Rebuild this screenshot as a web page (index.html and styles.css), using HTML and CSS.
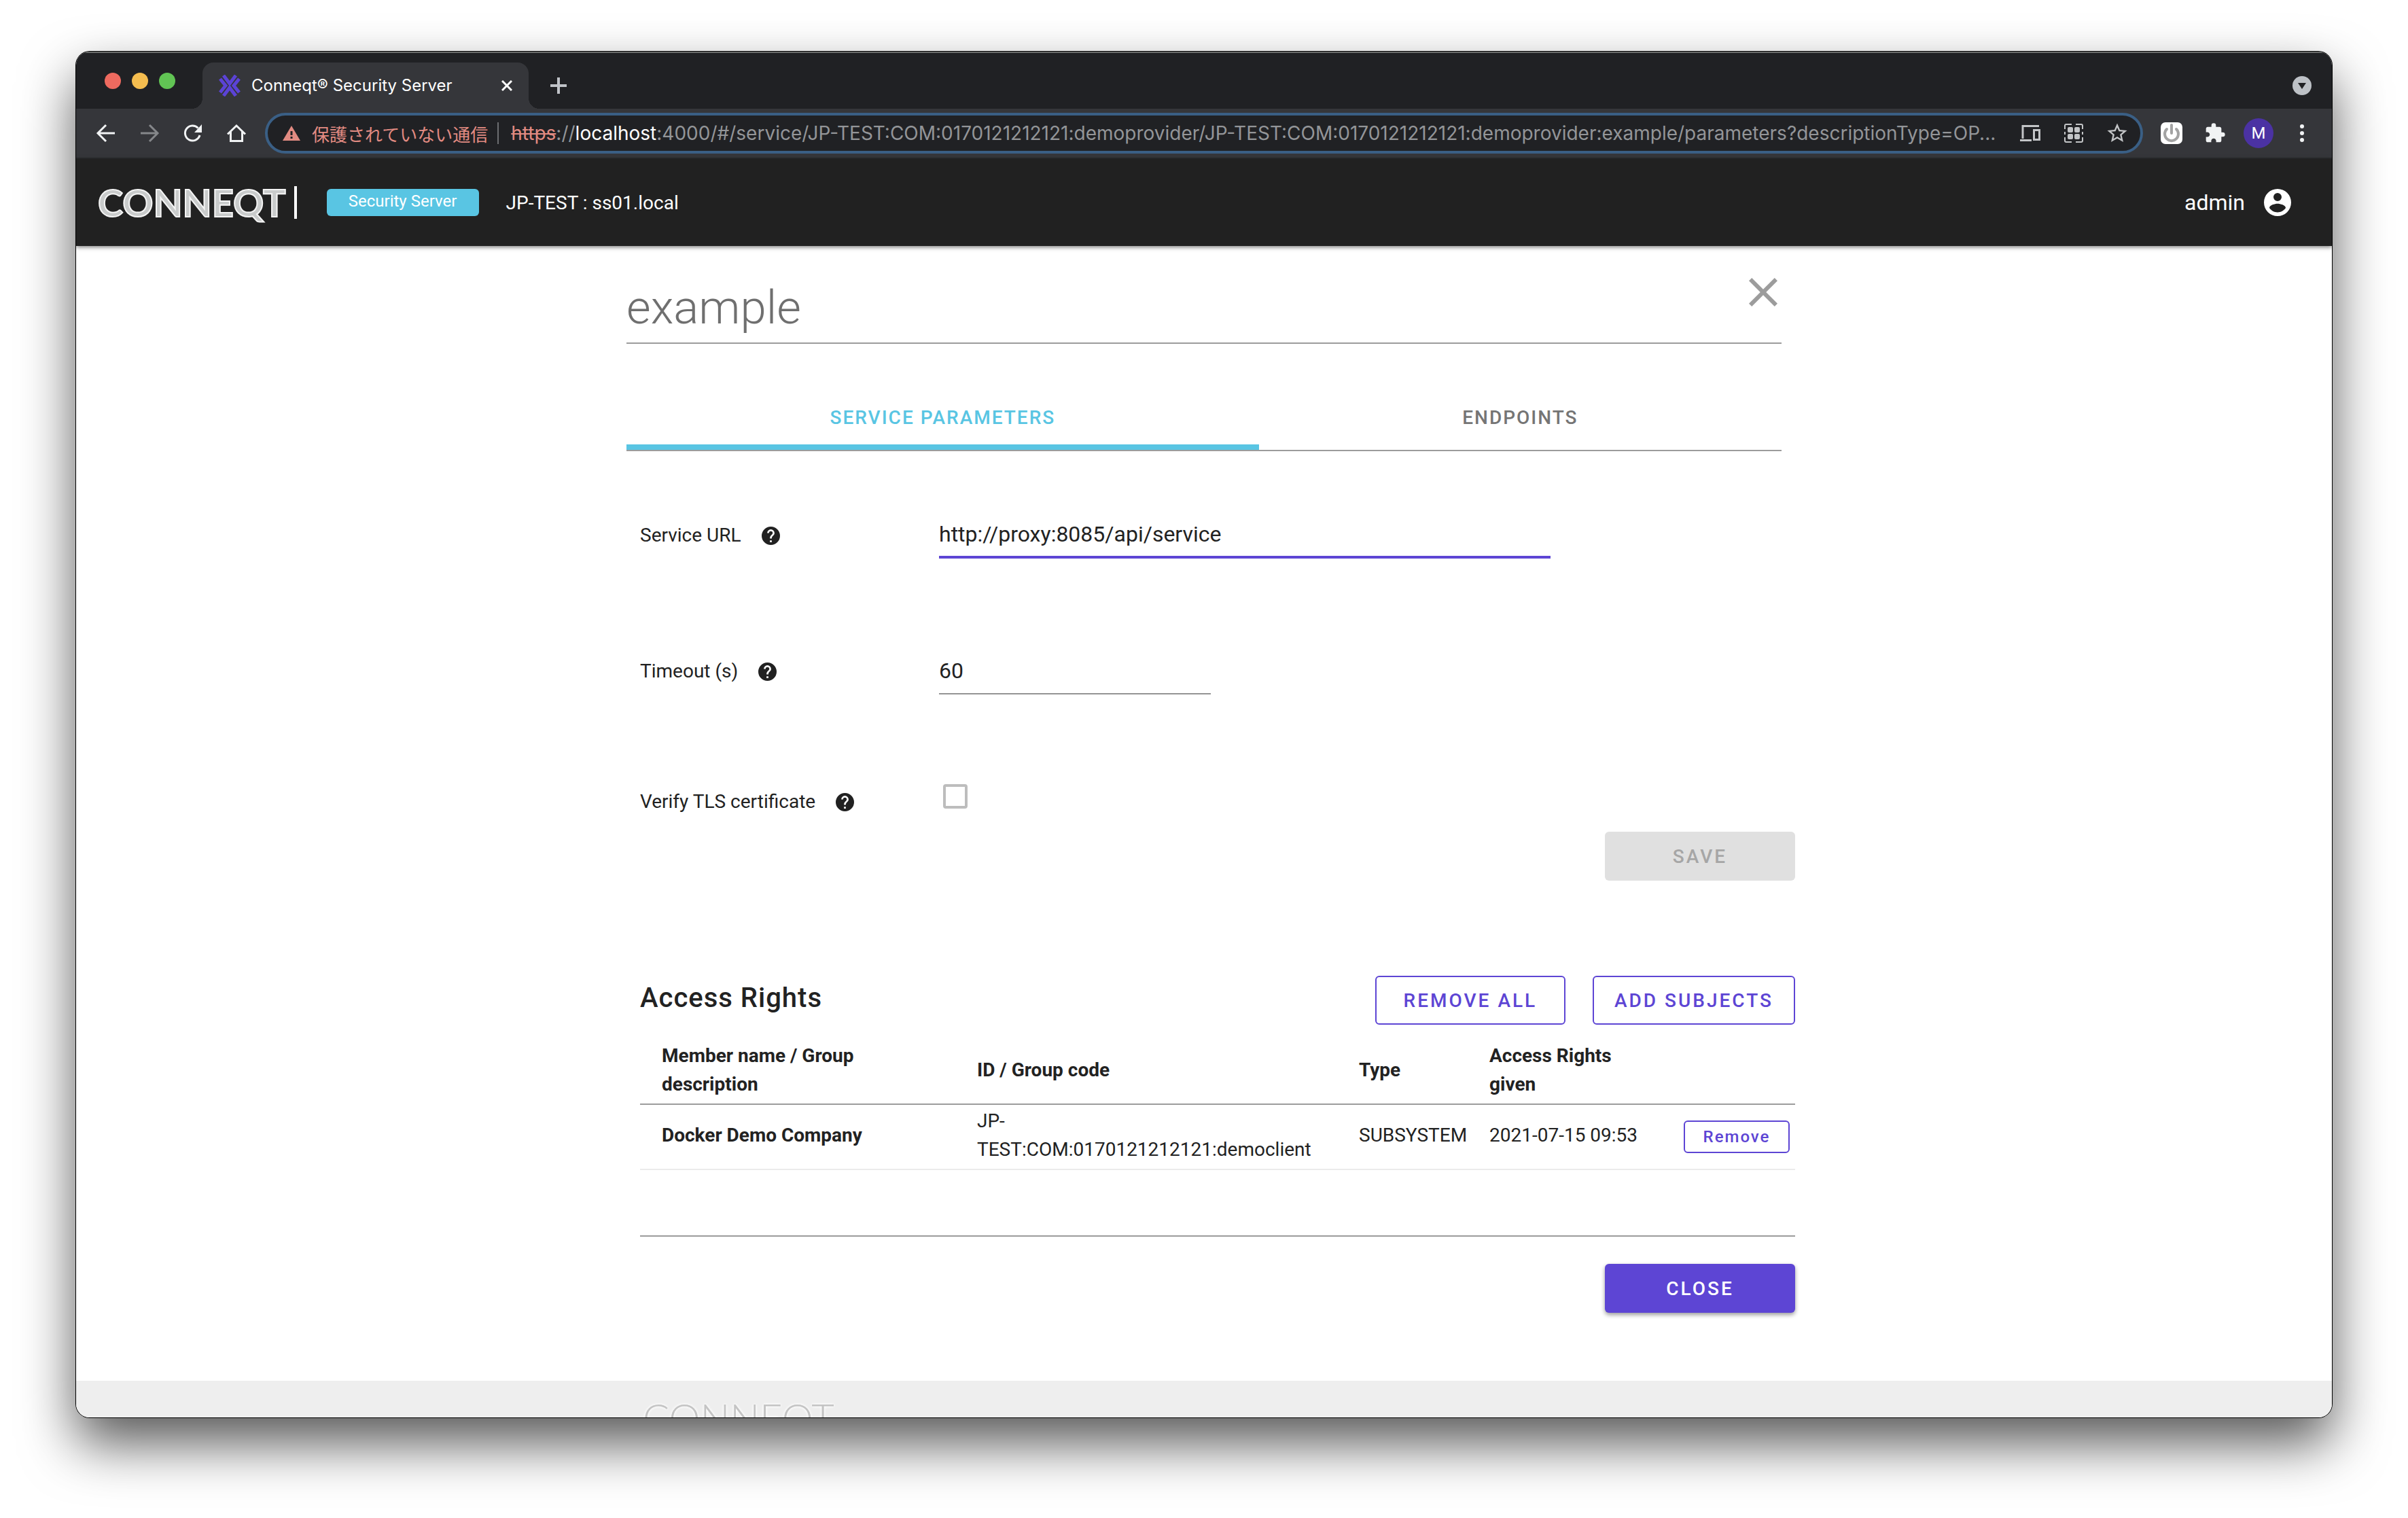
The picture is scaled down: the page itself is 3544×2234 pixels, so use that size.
FILE: index.html
```html
<!DOCTYPE html>
<html lang="en">
<head>
<meta charset="utf-8">
<title>Conneqt® Security Server</title>
<link rel="stylesheet" href="styles.css">
</head>
<body>
<div class="window">
  <div class="tabstrip">
    <div class="lights"><span class="light red"></span><span class="light yellow"></span><span class="light green"></span></div>
    <div class="browser-tab">
      <svg class="favicon" viewBox="0 0 32 32" fill="none" stroke="#5b43d6" stroke-width="5"><path d="M7 1l9 12 9-12M7 31l9-12 9 12M2 6l8 10-8 10M30 6l-8 10 8 10"/></svg>
      <span class="browser-tab-title">Conneqt® Security Server</span>
      <button class="icon-btn" aria-label="Close tab"><svg width="16" height="16" viewBox="0 0 16 16" stroke="#fff" stroke-width="3"><path d="M1 1l14 14M15 1L1 15"/></svg></button>
    </div>
    <button class="icon-btn new-tab" aria-label="New tab"><svg width="24" height="24" viewBox="0 0 24 24" stroke="#c0c3c8" stroke-width="4"><path d="M12 0v24M0 12h24"/></svg></button>
    <button class="icon-btn tab-search" aria-label="Search tabs"><svg width="28" height="28" viewBox="0 0 28 28"><circle cx="14" cy="14" r="14" fill="#bdc1c6"/><path d="M8 10h12l-6 9z" fill="#202124"/></svg></button>
  </div>
  <div class="toolbar">
    <nav class="nav-buttons">
      <button class="icon-btn" aria-label="Back"><svg width="32" height="32" viewBox="0 0 32 32" fill="none" stroke="#f1f3f4" stroke-width="3"><path d="M29 16H5M16 4L4 16l12 12"/></svg></button>
      <button class="icon-btn" aria-label="Forward"><svg width="32" height="32" viewBox="0 0 32 32" fill="none" stroke="#85878a" stroke-width="3"><path d="M3 16h24M16 4l12 12-12 12"/></svg></button>
      <button class="icon-btn" aria-label="Reload"><svg width="32" height="32" viewBox="0 0 32 32" fill="none" stroke="#f1f3f4" stroke-width="3"><path d="M26 19A11 11 0 1 1 23.500 8.500"/><path d="M29 3v12H18z" fill="#f1f3f4" stroke="none"/></svg></button>
      <button class="icon-btn" aria-label="Home"><svg width="32" height="32" viewBox="0 0 32 32" fill="none" stroke="#f1f3f4" stroke-width="3"><path d="M3 17.500L16 5l13 12.500M7.500 14v13.500h17V14"/></svg></button>
    </nav>
    <div class="omnibox">
      <svg class="warn" width="26" height="24" viewBox="0 0 26 24"><path d="M13 1l13 22H0z" fill="#e28b82"/><path d="M13 9v6M13 17v3" stroke="#202124" stroke-width="3"/></svg>
      <span class="insecure">保護されていない通信</span>
      <span class="divider"></span>
      <span class="url"><span class="scheme">https</span>://<span class="host">localhost</span>:4000/#/service/JP-TEST:COM:0170121212121:demoprovider/JP-TEST:COM:0170121212121:demoprovider:example/parameters?descriptionType=OP...</span>
      <div class="omni-icons">
        <svg width="32" height="32" viewBox="0 0 32 32" fill="none" stroke="#c3c5c7" stroke-width="3"><path d="M29 5.500H5V24M1 26.500h17M21.500 11.500h8v14h-8z"/></svg>
        <svg width="32" height="32" viewBox="0 0 32 32"><path d="M3 10V5a2 2 0 0 1 2-2h8M19 3h8a2 2 0 0 1 2 2v5M29 14v4M3 14v4M3 22v5a2 2 0 0 0 2 2h8M19 29h8a2 2 0 0 0 2-2v-5" fill="none" stroke="#c3c5c7" stroke-width="2"/><g fill="#c3c5c7"><rect x="7" y="7" width="8" height="8" rx="2"/><rect x="17" y="7" width="8" height="8" rx="2"/><rect x="7" y="17" width="8" height="8" rx="2"/><rect x="17" y="17" width="8" height="8" rx="2"/></g></svg>
        <svg width="32" height="32" viewBox="1 1 22 22" fill="#c3c5c7"><path d="M22 9.240l-7.190-.62L12 2 9.190 8.630 2 9.240l5.460 4.730L5.820 21 12 17.270 18.180 21l-1.630-7.030L22 9.240zM12 15.400l-3.760 2.270 1-4.280-3.320-2.880 4.380-.38L12 6.100l1.710 4.040 4.380.38-3.320 2.880 1 4.280L12 15.400z"/></svg>
      </div>
    </div>
    <div class="extensions">
      <button class="icon-btn" aria-label="Power extension"><svg width="32" height="32" viewBox="0 0 32 32"><rect width="32" height="32" rx="7" fill="#fff"/><path d="M9 10a10 10 0 1 0 14 0" fill="none" stroke="#a3a3a3" stroke-width="4" stroke-linecap="round"/><path d="M16 4v12" stroke="#a3a3a3" stroke-width="4" stroke-linecap="round"/></svg></button>
      <button class="icon-btn" aria-label="Extensions"><svg width="32" height="32" viewBox="0 0 24 24" fill="#f1f3f4"><path d="M20.500 11H19V7c0-1.100-.9-2-2-2h-4V3.500a2.500 2.500 0 0 0-5 0V5H4c-1.100 0-1.990.9-1.990 2v3.800H3.500c1.490 0 2.700 1.210 2.700 2.700s-1.210 2.700-2.700 2.700H2V20c0 1.100.9 2 2 2h3.800v-1.500c0-1.490 1.210-2.700 2.700-2.700s2.700 1.210 2.700 2.700V22H17c1.100 0 2-.9 2-2v-4h1.500a2.500 2.500 0 0 0 0-5z"/></svg></button>
      <button class="avatar">M</button>
      <button class="icon-btn" aria-label="Menu"><svg width="32" height="32" viewBox="0 0 32 32" fill="#f1f3f4"><circle cx="16" cy="6" r="3"/><circle cx="16" cy="16" r="3"/><circle cx="16" cy="26" r="3"/></svg></button>
    </div>
  </div>

  <header class="app-header">
    <span class="logo">CONNEQT</span>
    <span class="logo-bar"></span>
    <span class="badge">Security Server</span>
    <span class="server">JP-TEST : ss01.local</span>
    <button class="user">admin
      <svg width="48" height="48" viewBox="0 0 24 24" fill="#fff"><path d="M12 19.200c-2.500 0-4.710-1.280-6-3.200.03-2 4-3.100 6-3.100s5.970 1.100 6 3.100c-1.290 1.920-3.500 3.200-6 3.200M12 5a3 3 0 1 1 0 6 3 3 0 0 1 0-6m0-3a10 10 0 1 0 0 20 10 10 0 0 0 0-20z"/></svg>
    </button>
  </header>

  <main class="content">
    <div class="page-head">
      <h1>example</h1>
      <button class="icon-btn page-close" aria-label="Close"><svg width="42" height="42" viewBox="5 5 14 14" fill="#9c9c9c"><path d="M19 6.410L17.590 5 12 10.590 6.410 5 5 6.410 10.590 12 5 17.590 6.410 19 12 13.410 17.590 19 19 17.590 13.410 12 19 6.410z"/></svg></button>
    </div>
    <div class="tabs" role="tablist">
      <button class="tab active" role="tab" aria-selected="true">SERVICE PARAMETERS</button>
      <button class="tab" role="tab" aria-selected="false">ENDPOINTS</button>
    </div>

    <svg class="defs" width="0" height="0"><symbol id="help" viewBox="2 2 20 20"><path d="M15.070 11.250l-.9.920C13.450 12.890 13 13.500 13 15h-2v-.5c0-1.110.45-2.110 1.170-2.830l1.240-1.260c.37-.36.590-.86.590-1.410a2 2 0 0 0-4 0H8a4 4 0 1 1 8 0c0 .88-.36 1.670-.93 2.250M13 19h-2v-2h2M12 2a10 10 0 1 0 0 20 10 10 0 0 0 0-20z"/></symbol></svg>

    <form class="section form">
      <div class="field">
        <div class="field-label"><label for="url">Service URL</label><svg class="help"><use href="#help"/></svg></div>
        <input class="text-input focused" id="url" type="text" value="http://proxy:8085/api/service">
      </div>
      <div class="field">
        <div class="field-label"><label for="timeout">Timeout (s)</label><svg class="help"><use href="#help"/></svg></div>
        <input class="text-input short" id="timeout" type="text" value="60">
      </div>
      <div class="field check-field">
        <div class="field-label"><label for="tls">Verify TLS certificate</label><svg class="help"><use href="#help"/></svg></div>
        <input class="check" id="tls" type="checkbox">
      </div>
      <div class="actions"><button class="btn disabled" type="button" disabled>SAVE</button></div>
    </form>

    <section class="section">
      <div class="rights-head">
        <h2>Access Rights</h2>
        <button class="btn outlined">REMOVE ALL</button>
        <button class="btn outlined">ADD SUBJECTS</button>
      </div>
      <table class="rights">
        <colgroup><col class="c-name"><col class="c-id"><col class="c-type"><col class="c-date"><col></colgroup>
        <thead><tr><th class="name">Member name / Group description</th><th>ID / Group code</th><th>Type</th><th>Access Rights given</th><th></th></tr></thead>
        <tbody><tr><td class="name">Docker Demo Company</td><td>JP-TEST:COM:0170121212121:democlient</td><td>SUBSYSTEM</td><td>2021-07-15 09:53</td><td class="row-action"><button class="btn outlined small">Remove</button></td></tr></tbody>
      </table>
      <div class="actions page-actions"><button class="btn primary">CLOSE</button></div>
    </section>
  </main>

  <footer class="footer"><div class="footer-inner"><span class="logo footer-logo">CONNEQT</span></div></footer>
</div>
</body>
</html>
```
FILE: styles.css
```css
* { box-sizing: border-box; }
body { margin: 0; background: #fff; color: #222; font-family: Roboto, "Noto Sans CJK JP", sans-serif; font-size: 28px; }
button { border: 0; background: none; padding: 0; font: inherit; color: inherit; }
h1, h2 { margin: 0; }
svg { display: block; flex: none; }
.defs { position: absolute; }

.window { display: flex; flex-direction: column; height: calc(100vh - 224px); margin: 76px 112px 148px; border-radius: 20px; overflow: hidden; background: #fff; box-shadow: 0 0 0 1px #000, 0 38px 80px rgba(0, 0, 0, .66); }
.window > * { flex: none; }
.icon-btn { display: flex; align-items: center; justify-content: center; flex: none; }

/* Browser chrome */
.tabstrip { display: flex; align-items: center; height: 84px; padding: 16px 30px 0 42px; background: #202124; box-shadow: inset 0 2px #6b6d6c; }
.lights { display: flex; gap: 16px; width: 144px; padding-bottom: 14px; }
.light { width: 24px; height: 24px; border-radius: 50%; }
.red { background: #ee6a5f; }
.yellow { background: #f5bd4f; }
.green { background: #61c454; }
.browser-tab { position: relative; display: flex; align-items: center; width: 480px; height: 68px; padding: 0 24px; border-radius: 16px 16px 0 0; background: #35363a; color: #fff; font: 24px/32px Inter, sans-serif; }
.browser-tab::before, .browser-tab::after { content: ""; position: absolute; bottom: 0; width: 16px; height: 16px; }
.browser-tab::before { right: 100%; background: radial-gradient(circle at 0 0, transparent 16px, #35363a 16px); }
.browser-tab::after { left: 100%; background: radial-gradient(circle at 100% 0, transparent 16px, #35363a 16px); }
.favicon { width: 32px; height: 32px; margin-right: 16px; }
.browser-tab-title { flex: 1; white-space: nowrap; }
.new-tab { margin-left: 32px; }
.tab-search { margin-left: auto; }
.toolbar { display: flex; align-items: center; height: 74px; padding: 0 28px; background: #35363a; border-bottom: 2px solid #292a2c; }
.nav-buttons { display: flex; gap: 32px; margin-right: 26px; }
.omnibox { display: flex; flex: 1; align-items: center; min-width: 0; height: 60px; padding: 0 18px 0 22px; border: 4px solid #3a5f85; border-radius: 30px; background: #202124; font-family: Inter, "Noto Sans CJK JP", sans-serif; font-size: 28px; }
.insecure { margin-left: 17px; color: #e28b82; font-size: 26px; white-space: nowrap; }
.divider { width: 2px; height: 32px; margin: 0 18px 0 14px; background: #6c6e71; flex: none; }
.url { flex: 1; min-width: 0; overflow: hidden; color: #939598; white-space: nowrap; }
.scheme { color: #e28b82; text-decoration: line-through; }
.host { color: #fff; }
.omni-icons { display: flex; gap: 32px; margin-left: 16px; }
.extensions { display: flex; align-items: center; gap: 32px; margin-left: 26px; }
.avatar { width: 44px; height: 44px; margin: 0 -6px; border-radius: 50%; background: #4b32a3; color: #fff; font-size: 24px; }

/* Application header */
.app-header { display: flex; align-items: center; height: 128px; padding: 0 56px 0 32px; background: #212121; color: #fff; box-shadow: 0 2px 6px rgba(0, 0, 0, .5); }
.logo { color: #c9cbcb; font: 700 56px/64px Lato, sans-serif; -webkit-text-stroke: 2px #f4f4f4; }
.logo-bar { width: 4px; height: 48px; margin: 0 44px 0 12px; background: #fff; }
.badge { width: 224px; height: 40px; border-radius: 6px; background: #59c5e3; font-size: 24px; line-height: 36px; text-align: center; }
.server { margin-left: 40px; }
.user { display: flex; align-items: center; gap: 24px; margin-left: auto; font-size: 32px; }

/* Service page */
.content { width: 100%; max-width: 1700px; margin: 0 auto; padding-bottom: 100px; }
.page-head { display: flex; justify-content: space-between; align-items: flex-start; padding: 47px 6px 11px 0; border-bottom: 2px solid #9c9c9c; }
h1 { padding-top: 4px; color: #6f6f6f; font-size: 69px; font-weight: 300; line-height: 80px; }
.tabs { display: flex; margin-top: 60px; border-bottom: 2px solid #9c9c9c; }
.tab { flex: 1 1 auto; height: 96px; color: #757575; font-weight: 500; letter-spacing: 2px; }
.tab.active { color: #59c5e3; box-shadow: inset 0 -8px #59c5e3; }
.section { margin: 0 -20px 0 20px; }
.form { padding-top: 90px; }
.field { display: grid; grid-template-columns: 440px 1fr; align-items: center; margin-bottom: 132px; }
.field-label { display: flex; align-items: center; gap: 30px; line-height: 40px; }
.help { width: 27px; height: 27px; fill: #212121; }
.text-input { width: 900px; max-width: 100%; height: 68px; padding: 0; border: 0; border-bottom: 2px solid #949494; outline: 0; background: none; color: #222; font: 32px/64px Roboto, sans-serif; }
.text-input.focused { border-bottom: 4px solid #5d45d4; }
.text-input.short { width: 400px; }
.check-field { align-items: start; margin-bottom: 24px; }
.check-field .field-label { padding-top: 6px; }
.check { appearance: none; width: 36px; height: 36px; margin: 0 6px; border: 4px solid #bdbdbd; border-radius: 4px; }
.actions { display: flex; justify-content: flex-end; }
.btn { min-width: 280px; height: 72px; padding: 0 30px; border-radius: 6px; font-weight: 500; letter-spacing: 3px; }
.disabled { background: #e0e0e0; color: #a6a6a6; }
.outlined { border: 2px solid #5d45d4; color: #5d45d4; }
.primary { background: #5d45d4; color: #fff; box-shadow: 0 3px 6px rgba(0, 0, 0, .4); }
.small { min-width: 156px; height: 48px; padding: 0; font-size: 24px; letter-spacing: 2px; }
.rights-head { display: flex; align-items: flex-start; gap: 40px; margin: 140px 0 18px; }
h2 { flex: 1; font-size: 40px; font-weight: 500; line-height: 66px; letter-spacing: 1px; }
.rights { width: 100%; border-collapse: separate; border-spacing: 0; table-layout: fixed; line-height: 42px; text-align: left; border-bottom: 2px solid #9c9c9c; padding-bottom: 96px; }
.c-name { width: 464px; }
.c-id { width: 562px; }
.c-type { width: 192px; }
.c-date { width: 260px; }
.rights th, .rights td { padding: 0 0 0 32px; }
.rights .name { padding-right: 32px; font-weight: 700; }
.rights th { height: 100px; border-bottom: 2px solid #9c9c9c; }
.rights td { height: 96px; padding-bottom: 4px; border-bottom: 2px solid #ebebeb; }
.rights .row-action { padding: 0 8px 0 0; text-align: right; }
.page-actions { margin-top: 40px; }

.footer { height: 220px; background: #eee; }
.footer-inner { max-width: 1700px; margin: 0 auto; padding: 22px 24px; }
.footer-logo { color: #c4c4c4; font-size: 58px; font-weight: 300; -webkit-text-stroke: 0; text-shadow: 0 0 4px #fff, 0 0 4px #fff; }
```
